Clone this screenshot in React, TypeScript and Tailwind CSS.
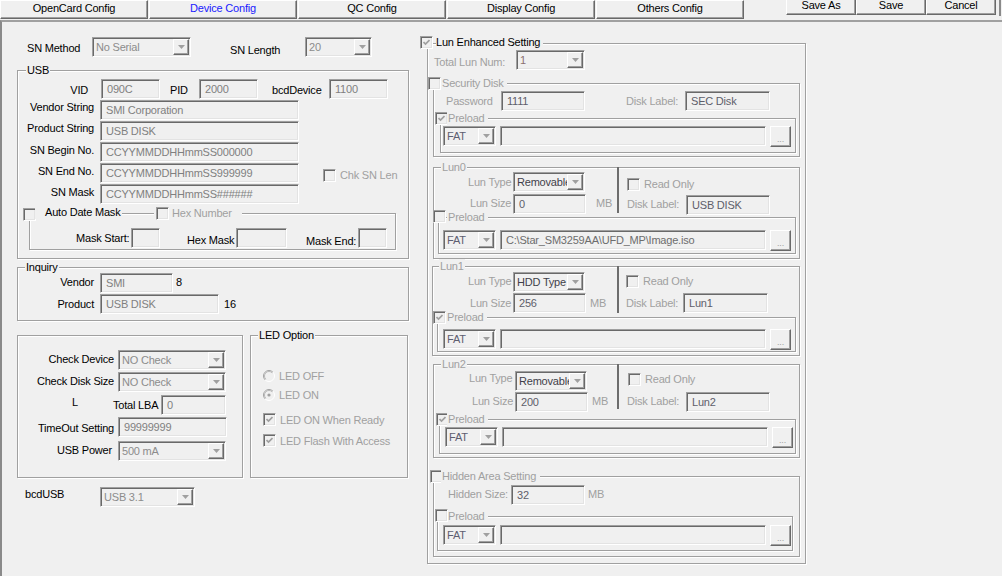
import React from 'react';

const sunken =
  'border border-t-[#a0a0a0] border-l-[#a0a0a0] border-r-white border-b-white shadow-[inset_1px_1px_0_#696969,inset_-1px_-1px_0_#e3e3e3]';
const raised =
  'border border-t-white border-l-white border-r-[#696969] border-b-[#696969] shadow-[inset_-1px_-1px_0_#a0a0a0]';
const etched = 'border border-[#a0a0a0] shadow-[inset_1px_1px_0_#fff,1px_1px_0_#fff]';
const dim = 'text-[#a0a0a0]';

function Edit({ className = '', tone = 'text-[#808080]', children }: { className?: string; tone?: string; children?: React.ReactNode }) {
  return (
    <div className={`${sunken} h-[20px] shrink-0 flex items-center pl-[5px] overflow-hidden whitespace-nowrap bg-[#f0f0f0] ${tone} ${className}`}>
      {children}
    </div>
  );
}

function Combo({ className = '', tone = 'text-[#8c8c8c]', children }: { className?: string; tone?: string; children?: React.ReactNode }) {
  return (
    <div className={`${sunken} h-[20px] shrink-0 flex items-center p-[1px] bg-[#f0f0f0] ${className}`}>
      <span className={`flex-1 min-w-0 overflow-hidden whitespace-nowrap pl-[2px] ${tone}`}>{children}</span>
      <span className={`${raised} w-[16px] h-[16px] shrink-0 flex items-center justify-center`}>
        <svg width="7" height="4" viewBox="0 0 7 4">
          <path d="M0 0h7L3.5 4z" fill="#a0a0a0" />
        </svg>
      </span>
    </div>
  );
}

function Check({ checked = false, className = '' }: { checked?: boolean; className?: string }) {
  return (
    <span className={`${sunken} w-[13px] h-[13px] shrink-0 flex items-center justify-center bg-[#f0f0f0] ${className}`}>
      {checked && (
        <svg width="7" height="7" viewBox="0 0 7 7">
          <path d="M0.5 3 L2.5 5 L6.5 1" fill="none" stroke="#a0a0a0" strokeWidth="1.7" />
        </svg>
      )}
    </span>
  );
}

function Radio({ checked = false }: { checked?: boolean }) {
  return (
    <svg width="12" height="12" viewBox="0 0 12 12" className="shrink-0">
      <circle cx="6" cy="6" r="5.5" fill="#f0f0f0" stroke="#ffffff" />
      <path d="M2.1 9.9 A5.5 5.5 0 0 1 9.9 2.1" fill="none" stroke="#a0a0a0" />
      <path d="M2.8 9.2 A4.5 4.5 0 0 1 9.2 2.8" fill="none" stroke="#b8b8b8" />
      {checked && <circle cx="6" cy="6" r="1.6" fill="#a0a0a0" />}
    </svg>
  );
}

function Dots() {
  return (
    <div className={`${raised} ml-[4px] w-[21px] h-[21px] shrink-0 flex items-end justify-center pb-[3px] text-[9px] leading-[8px] ${dim}`}>
      ...
    </div>
  );
}

function FileRow({ className = '', path = '' }: { className?: string; path?: string }) {
  return (
    <div className={`flex items-start ${className}`}>
      <Combo className="w-[53px]" tone="text-[#5e5e70]">FAT</Combo>
      <Edit className="ml-[4px] w-[266px]" tone="text-[#6d6d6d]">{path}</Edit>
      <Dots />
    </div>
  );
}

function Preload({
  className,
  chk,
  txt,
  row,
  checked = false,
  path = '',
}: {
  className: string;
  chk: string;
  txt: string;
  row: string;
  checked?: boolean;
  path?: string;
}) {
  return (
    <div className={`relative shrink-0 ${etched} ${className}`}>
      <Check checked={checked} className={`absolute ${chk}`} />
      <span className={`absolute -top-[8px] pr-[3px] bg-[#f0f0f0] ${dim} ${txt}`}>Preload</span>
      <FileRow className={row} path={path} />
    </div>
  );
}

const tabs = ['OpenCard Config', 'Device Config', 'QC Config', 'Display Config', 'Others Config'];

function TopBar() {
  return (
    <div className="flex h-[20px]">
      <div className="flex gap-[1px]">
        {tabs.map(t => (
          <div
            key={t}
            className={`${raised} w-[148px] h-[19px] flex justify-center ${t === 'Device Config' ? 'text-[#1a1aff]' : 'text-black'}`}
          >
            {t}
          </div>
        ))}
      </div>
      <div className="flex ml-[42px] -mt-[6px]">
        {['Save As', 'Save', 'Cancel'].map(b => (
          <div key={b} className={`${raised} w-[70px] h-[21px] flex items-center justify-center`}>
            {b}
          </div>
        ))}
      </div>
      <div className="ml-[3px] w-[2px] h-[16px] bg-[#8a8a8a]" />
    </div>
  );
}

const strRows: [string, string, boolean][] = [
  ['Vendor String', 'SMI Corporation', false],
  ['Product String', 'USB DISK', false],
  ['SN Begin No.', 'CCYYMMDDHHmmSS000000', true],
  ['SN End No.', 'CCYYMMDDHHmmSS999999', true],
  ['SN Mask', 'CCYYMMDDHHmmSS######', true],
];

function LeftPane() {
  return (
    <div className="w-[407px] shrink-0 pl-[15px] flex flex-col">
      <div className="flex items-start mt-[15px]">
        <span className="ml-[10px] w-[65px] mt-[4px]">SN Method</span>
        <Combo className="w-[99px]">No Serial</Combo>
        <span className="ml-[39px] w-[75px] mt-[6px]">SN Length</span>
        <Combo className="w-[67px]">20</Combo>
      </div>

      <div className={`relative shrink-0 mt-[13px] w-[392px] h-[189px] ${etched}`}>
        <span className="absolute -top-[8px] left-[8px] px-[1px] bg-[#f0f0f0]">USB</span>
        <div className="flex items-start mt-[8px]">
          <span className="w-[70px] text-right mt-[4px]">VID</span>
          <Edit className="ml-[13px] w-[59px]">090C</Edit>
          <span className="ml-[10px] w-[29px] mt-[4px]">PID</span>
          <Edit className="w-[59px]">2000</Edit>
          <span className="ml-[14px] w-[57px] mt-[4px]">bcdDevice</span>
          <Edit className="w-[59px]">1100</Edit>
        </div>
        {strRows.map(([label, value, low]) => (
          <div key={label} className="flex items-start mt-[1px]">
            <span className={`w-[76px] text-right ${low ? 'mt-[1px]' : ''}`}>{label}</span>
            <Edit className="ml-[6px] w-[199px]">{value}</Edit>
            {label === 'SN End No.' && (
              <div className="flex items-center ml-[24px] mt-[5px]">
                <Check />
                <span className={`ml-[4px] ${dim}`}>Chk SN Len</span>
              </div>
            )}
          </div>
        ))}
        <div className={`relative ml-[11px] mt-[9px] w-[367px] h-[37px] ${etched}`}>
          <Check className="absolute -left-[7px] -top-[6px]" />
          <span className="absolute left-[5px] -top-[9px] pl-[10px] pr-[2px] bg-[#f0f0f0]">Auto Date Mask</span>
          <span className={`absolute left-[124px] -top-[8px] flex items-center pl-[2px] pr-[10px] bg-[#f0f0f0] ${dim}`}>
            <Check />
            <span className="ml-[3px]">Hex Number</span>
          </span>
          <div className="flex items-start mt-[14px]">
            <span className="ml-[46px] w-[55px] mt-[3px]">Mask Start:</span>
            <Edit className="w-[29px]" />
            <span className="ml-[27px] w-[49px] mt-[5px]">Hex Mask</span>
            <Edit className="w-[51px]" />
            <span className="ml-[19px] w-[52px] mt-[6px]">Mask End:</span>
            <Edit className="w-[29px]" />
          </div>
        </div>
      </div>

      <div className={`relative shrink-0 mt-[8px] w-[392px] h-[54px] ${etched}`}>
        <span className="absolute -top-[8px] left-[7px] px-[1px] bg-[#f0f0f0]">Inquiry</span>
        <div className="flex items-start mt-[5px]">
          <span className="w-[76px] text-right mt-[2px]">Vendor</span>
          <Edit className="ml-[6px] w-[73px]">SMI</Edit>
          <span className="ml-[3px] mt-[2px]">8</span>
        </div>
        <div className="flex items-start mt-[1px]">
          <span className="w-[76px] text-right mt-[3px]">Product</span>
          <Edit className="ml-[6px] w-[119px]">USB DISK</Edit>
          <span className="ml-[5px] mt-[3px]">16</span>
        </div>
      </div>

      <div className="flex items-start mt-[14px]">
        <div className={`shrink-0 w-[226px] h-[143px] ${etched}`}>
          <div className="flex items-start mt-[14px]">
            <span className="w-[96px] text-right mt-[2px]">Check Device</span>
            <Combo className="ml-[4px] w-[108px]">NO Check</Combo>
          </div>
          <div className="flex items-start mt-[2px]">
            <span className="w-[96px] text-right mt-[2px]">Check Disk Size</span>
            <Combo className="ml-[4px] w-[108px]">NO Check</Combo>
          </div>
          <div className="flex items-start mt-[3px]">
            <span className="ml-[54px] w-[41px]">L</span>
            <span className="w-[48px] mt-[3px]">Total LBA</span>
            <Edit className="w-[65px]">0</Edit>
          </div>
          <div className="flex items-start mt-[2px]">
            <span className="w-[96px] text-right mt-[4px]">TimeOut Setting</span>
            <Edit className="ml-[4px] w-[109px]">99999999</Edit>
          </div>
          <div className="flex items-start mt-[4px]">
            <span className="w-[94px] text-right mt-[2px]">USB Power</span>
            <Combo className="ml-[6px] w-[108px]">500 mA</Combo>
          </div>
        </div>

        <div className={`relative shrink-0 ml-[7px] w-[158px] h-[143px] ${etched}`}>
          <span className="absolute -top-[8px] left-[7px] px-[1px] bg-[#f0f0f0]">LED Option</span>
          <div className={`flex items-center ml-[12px] mt-[34px] h-[12px] ${dim}`}>
            <Radio />
            <span className="ml-[4px]">LED OFF</span>
          </div>
          <div className={`flex items-center ml-[12px] mt-[7px] h-[12px] ${dim}`}>
            <Radio checked />
            <span className="ml-[4px]">LED ON</span>
          </div>
          <div className={`flex items-center ml-[12px] mt-[12px] h-[13px] ${dim}`}>
            <Check checked />
            <span className="ml-[4px]">LED ON When Ready</span>
          </div>
          <div className={`flex items-center ml-[12px] mt-[8px] h-[13px] ${dim}`}>
            <Check checked />
            <span className="ml-[4px]">LED Flash With Access</span>
          </div>
        </div>
      </div>

      <div className="flex items-start mt-[9px]">
        <span className="ml-[8px] w-[75px]">bcdUSB</span>
        <Combo className="w-[95px]">USB 3.1</Combo>
      </div>
    </div>
  );
}

const dark = 'text-[#5e5e6a]';
const lunTone = 'text-[#3f3f4a]';

function RightPane() {
  return (
    <div className={`relative shrink-0 ml-[18px] mt-[21px] w-[379px] h-[521px] ${etched}`}>
      <Check checked className="absolute -left-[8px] -top-[8px]" />
      <span className="absolute left-[8px] -top-[9px] pr-[3px] bg-[#f0f0f0]">Lun Enhanced Setting</span>

      <div className="flex items-start mt-[6px]">
        <span className={`ml-[6px] w-[82px] mt-[5px] ${dim}`}>Total Lun Num:</span>
        <Combo className="w-[69px]" tone="text-[#8a7070]">1</Combo>
      </div>

      {/* security disk */}
      <div className={`relative ml-[5px] mt-[13px] w-[367px] h-[74px] ${etched}`}>
        <Check className="absolute -left-[6px] -top-[7px]" />
        <span className={`absolute left-[7px] -top-[8px] pl-[1px] pr-[3px] bg-[#f0f0f0] ${dim}`}>Security Disk</span>
        <div className="flex items-start mt-[7px]">
          <span className={`ml-[12px] w-[55px] mt-[3px] ${dim}`}>Password</span>
          <Edit className="w-[84px]" tone={dark}>1111</Edit>
          <span className={`ml-[41px] w-[59px] mt-[3px] ${dim}`}>Disk Label:</span>
          <Edit className="w-[85px]" tone={dark}>SEC Disk</Edit>
        </div>
        <Preload
          className="ml-[6px] mt-[7px] w-[356px] h-[35px]"
          chk="-left-[6px] -top-[7px]"
          txt="left-[6px] pl-[1px]"
          row="mt-[7px] ml-[2px]"
          checked
        />
      </div>

      {/* lun0 */}
      <div className={`relative ml-[5px] mt-[10px] w-[367px] h-[92px] ${etched}`}>
        <span className={`absolute left-[7px] -top-[8px] px-[1px] bg-[#f0f0f0] ${dim}`}>Lun0</span>
        <div className="flex items-start h-[47px]">
          <div className="w-[183px] shrink-0">
            <div className="flex items-start mt-[4px]">
              <span className={`ml-[34px] w-[45px] mt-[3px] ${dim}`}>Lun Type</span>
              <Combo className="w-[72px]" tone={lunTone}>Removable</Combo>
            </div>
            <div className="flex items-start mt-[2px]">
              <span className={`ml-[36px] w-[43px] mt-[2px] ${dim}`}>Lun Size</span>
              <Edit className="w-[73px]" tone={dark}>0</Edit>
              <span className={`ml-[10px] mt-[2px] ${dim}`}>MB</span>
            </div>
          </div>
          <div className="w-[2px] h-[46px] -mt-[1px] shrink-0 bg-[#6d6d6d]" />
          <div>
            <div className="flex items-center ml-[8px] mt-[9px]">
              <Check />
              <span className={`ml-[4px] ${dim}`}>Read Only</span>
            </div>
            <div className="flex items-start mt-[4px]">
              <span className={`ml-[8px] w-[59px] mt-[2px] ${dim}`}>Disk Label:</span>
              <Edit className="w-[84px]" tone={dark}>USB DISK</Edit>
            </div>
          </div>
        </div>
        <Preload
          className="ml-[4px] mt-[2px] w-[358px] h-[37px]"
          chk="-left-[6px] -top-[8px]"
          txt="left-[8px] pl-[1px]"
          row="mt-[12px] ml-[4px]"
          path="C:\Star_SM3259AA\UFD_MP\Image.iso"
        />
      </div>

      {/* lun1 */}
      <div className={`relative ml-[4px] mt-[7px] w-[368px] h-[90px] ${etched}`}>
        <span className={`absolute left-[6px] -top-[8px] px-[1px] bg-[#f0f0f0] ${dim}`}>Lun1</span>
        <div className="flex items-start h-[47px]">
          <div className="w-[184px] shrink-0">
            <div className="flex items-start mt-[5px]">
              <span className={`ml-[35px] w-[45px] mt-[2px] ${dim}`}>Lun Type</span>
              <Combo className="w-[72px]" tone={lunTone}>HDD Type</Combo>
            </div>
            <div className="flex items-start mt-[1px]">
              <span className={`ml-[37px] w-[43px] mt-[3px] ${dim}`}>Lun Size</span>
              <Edit className="w-[73px]" tone={dark}>256</Edit>
              <span className={`ml-[4px] mt-[3px] ${dim}`}>MB</span>
            </div>
          </div>
          <div className="w-[2px] h-[47px] -mt-[1px] shrink-0 bg-[#6d6d6d]" />
          <div>
            <div className="flex items-center ml-[7px] mt-[7px]">
              <Check />
              <span className={`ml-[4px] ${dim}`}>Read Only</span>
            </div>
            <div className="flex items-start mt-[5px]">
              <span className={`ml-[7px] w-[57px] mt-[3px] ${dim}`}>Disk Label:</span>
              <Edit className="w-[85px]" tone={dark}>Lun1</Edit>
            </div>
          </div>
        </div>
        <Preload
          className="ml-[4px] mt-[3px] w-[359px] h-[35px]"
          chk="-left-[5px] -top-[7px]"
          txt="left-[8px] pl-[1px]"
          row="mt-[11px] ml-[5px]"
          checked
        />
      </div>

      {/* lun2 */}
      <div className={`relative ml-[5px] mt-[8px] w-[367px] h-[94px] ${etched}`}>
        <span className={`absolute left-[7px] -top-[8px] px-[1px] bg-[#f0f0f0] ${dim}`}>Lun2</span>
        <div className="flex items-start h-[47px]">
          <div className="w-[183px] shrink-0">
            <div className="flex items-start mt-[6px]">
              <span className={`ml-[35px] w-[46px] ${dim}`}>Lun Type</span>
              <Combo className="w-[72px]" tone={lunTone}>Removable</Combo>
            </div>
            <div className="flex items-start mt-[1px]">
              <span className={`ml-[38px] w-[43px] mt-[2px] ${dim}`}>Lun Size</span>
              <Edit className="w-[73px]" tone={dark}>200</Edit>
              <span className={`ml-[4px] mt-[2px] ${dim}`}>MB</span>
            </div>
          </div>
          <div className="w-[2px] h-[45px] -mt-[1px] shrink-0 bg-[#6d6d6d]" />
          <div>
            <div className="flex items-center ml-[9px] mt-[7px]">
              <Check />
              <span className={`ml-[4px] ${dim}`}>Read Only</span>
            </div>
            <div className="flex items-start mt-[6px]">
              <span className={`ml-[8px] w-[59px] mt-[2px] ${dim}`}>Disk Label:</span>
              <Edit className="w-[84px]" tone={dark}>Lun2</Edit>
            </div>
          </div>
        </div>
        <Preload
          className="ml-[5px] mt-[7px] w-[357px] h-[35px]"
          chk="-left-[4px] -top-[7px]"
          txt="left-[7px] pl-[1px]"
          row="mt-[7px] ml-[5px]"
          checked
        />
      </div>

      {/* hidden area */}
      <div className={`relative ml-[5px] mt-[18px] w-[367px] h-[81px] ${etched}`}>
        <Check className="absolute -left-[4px] -top-[7px]" />
        <span className={`absolute left-[7px] -top-[8px] pl-[1px] pr-[4px] bg-[#f0f0f0] ${dim}`}>Hidden Area Setting</span>
        <div className="flex items-start mt-[8px]">
          <span className={`ml-[14px] w-[63px] mt-[2px] ${dim}`}>Hidden Size:</span>
          <Edit className="w-[74px]" tone={dark}>32</Edit>
          <span className={`ml-[3px] mt-[2px] ${dim}`}>MB</span>
        </div>
        <Preload
          className="ml-[3px] mt-[11px] w-[356px] h-[35px]"
          chk="-left-[3px] -top-[8px]"
          txt="left-[10px]"
          row="mt-[8px] ml-[5px]"
        />
      </div>
    </div>
  );
}

export default function App() {
  return (
    <div className="w-[1002px] h-[576px] overflow-hidden bg-[#f0f0f0] whitespace-nowrap font-['Liberation_Sans',Arial,sans-serif] text-[11px] leading-[14px] tracking-[-0.2px] text-black">
      <TopBar />
      <div className="flex h-[556px] border-t-2 border-l-2 border-t-[#a0a0a0] border-l-[#8a8a8a]">
        <LeftPane />
        <RightPane />
      </div>
    </div>
  );
}
